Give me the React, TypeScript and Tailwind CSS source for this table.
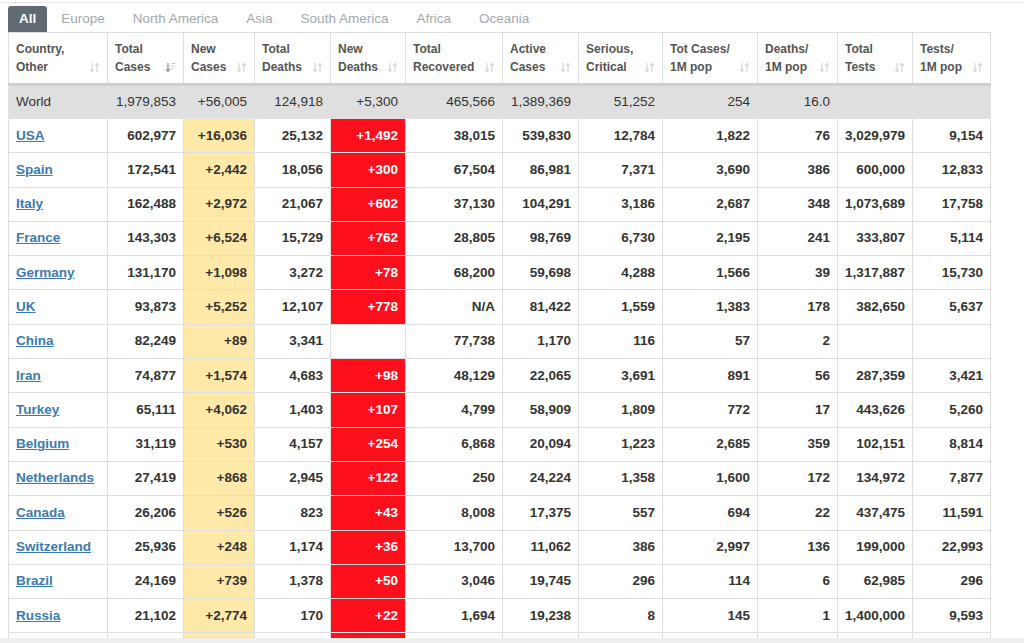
import React from 'react';

const tabs = ['All', 'Europe', 'North America', 'Asia', 'South America', 'Africa', 'Oceania'];

const headers = [
  ['Country,', 'Other'],
  ['Total', 'Cases'],
  ['New', 'Cases'],
  ['Total', 'Deaths'],
  ['New', 'Deaths'],
  ['Total', 'Recovered'],
  ['Active', 'Cases'],
  ['Serious,', 'Critical'],
  ['Tot Cases/', '1M pop'],
  ['Deaths/', '1M pop'],
  ['Total', 'Tests'],
  ['Tests/', '1M pop'],
];

const widths = [99, 76, 71, 76, 75, 97, 76, 84, 95, 80, 75, 78];

const world = ['World', '1,979,853', '+56,005', '124,918', '+5,300', '465,566', '1,389,369', '51,252', '254', '16.0', '', ''];

const rows = [
  ['USA', '602,977', '+16,036', '25,132', '+1,492', '38,015', '539,830', '12,784', '1,822', '76', '3,029,979', '9,154'],
  ['Spain', '172,541', '+2,442', '18,056', '+300', '67,504', '86,981', '7,371', '3,690', '386', '600,000', '12,833'],
  ['Italy', '162,488', '+2,972', '21,067', '+602', '37,130', '104,291', '3,186', '2,687', '348', '1,073,689', '17,758'],
  ['France', '143,303', '+6,524', '15,729', '+762', '28,805', '98,769', '6,730', '2,195', '241', '333,807', '5,114'],
  ['Germany', '131,170', '+1,098', '3,272', '+78', '68,200', '59,698', '4,288', '1,566', '39', '1,317,887', '15,730'],
  ['UK', '93,873', '+5,252', '12,107', '+778', 'N/A', '81,422', '1,559', '1,383', '178', '382,650', '5,637'],
  ['China', '82,249', '+89', '3,341', '', '77,738', '1,170', '116', '57', '2', '', ''],
  ['Iran', '74,877', '+1,574', '4,683', '+98', '48,129', '22,065', '3,691', '891', '56', '287,359', '3,421'],
  ['Turkey', '65,111', '+4,062', '1,403', '+107', '4,799', '58,909', '1,809', '772', '17', '443,626', '5,260'],
  ['Belgium', '31,119', '+530', '4,157', '+254', '6,868', '20,094', '1,223', '2,685', '359', '102,151', '8,814'],
  ['Netherlands', '27,419', '+868', '2,945', '+122', '250', '24,224', '1,358', '1,600', '172', '134,972', '7,877'],
  ['Canada', '26,206', '+526', '823', '+43', '8,008', '17,375', '557', '694', '22', '437,475', '11,591'],
  ['Switzerland', '25,936', '+248', '1,174', '+36', '13,700', '11,062', '386', '2,997', '136', '199,000', '22,993'],
  ['Brazil', '24,169', '+739', '1,378', '+50', '3,046', '19,745', '296', '114', '6', '62,985', '296'],
  ['Russia', '21,102', '+2,774', '170', '+22', '1,694', '19,238', '8', '145', '1', '1,400,000', '9,593'],
  // next row, only its top edge shows under the fold
  ['', '', '', '', ' ', '', '', '', '', '', '', ''],
];

// small double arrow used by the sortable headers
const SortIcon = ({ active }: { active?: boolean }) => {
  if (active) {
    return <svg width="11" height="11" viewBox="0 0 11 11" className="shrink-0">
        <path d="M3 1v8M1 7l2 2.5L5 7" stroke="#999" strokeWidth="1.3" fill="none" />
        <path d="M6.5 1.5h4M6.5 4h3M6.5 6.5h2" stroke="#c9c9c9" strokeWidth="1.1" />
      </svg>;
  }
  return <svg width="11" height="11" viewBox="0 0 11 11" className="shrink-0">
      <path d="M3 1v8.5M1.2 7.3L3 9.5l1.8-2.2" stroke="#d6d6d6" strokeWidth="1.2" fill="none" />
      <path d="M8 10V1.5M6.2 3.7L8 1.5l1.8 2.2" stroke="#d6d6d6" strokeWidth="1.2" fill="none" />
    </svg>;
};

export default function App() {
  return <div className="h-[643px] w-[1024px] overflow-hidden bg-white flex flex-col" style={{ fontFamily: '"Liberation Sans", Arial, sans-serif' }}>
      <div className="h-[2px] shrink-0" />
      <div className="h-px bg-[#e6e6e6] shrink-0" />
      <div className="flex items-end pl-2 pt-[3px] h-[29px] shrink-0">
        {tabs.map((t, i) => i === 0 ? <div key={t} className="bg-[#606a72] text-white font-bold text-[13.5px] h-[26px] px-[11px] flex items-center rounded-t-[3px]">
              {t}
            </div> : <div key={t} className="text-[#a4a9ad] text-[13.5px] h-[26px] px-[14px] flex items-center">
              {t}
            </div>)}
      </div>
      <div className="flex-1 overflow-hidden pl-2">
        <table className="table-fixed border-collapse w-[982px]">
          <colgroup>
            {widths.map((w, i) => <col key={i} style={{ width: w }} />)}
          </colgroup>
          <thead>
            <tr>
              {headers.map((h, i) => <th key={i} className="border border-[#dedede] border-b-[3px] border-b-[#cfcfcf] h-[52px] px-[7px] pt-[7px] pb-[6px] text-left align-top font-bold text-[12px] leading-[18px] text-[#555]">
                  <div>{h[0]}</div>
                  <div className="flex items-center justify-between gap-1">
                    <span>{h[1]}</span>
                    <SortIcon active={i === 1} />
                  </div>
                </th>)}
            </tr>
          </thead>
          <tbody>
            <tr className="bg-[#dfdfdf]">
              {world.map((v, i) => <td key={i} className={`border border-[#e2e2e2] h-[34px] px-[7px] text-[13.5px] text-[#333] ${i === 0 ? 'text-left' : 'text-right'}`}>
                  {v}
                </td>)}
            </tr>
            {rows.map((r, ri) => <tr key={ri}>
                {r.map((v, i) => {
              let bg = '';
              let color = 'text-[#333]';
              if (i === 2) bg = 'bg-[#fee9a9]';
              if (i === 4 && v) {
                bg = 'bg-[#fe0f1c]';
                color = 'text-white';
              }
              return <td key={i} className={`border border-[#dedede] h-[34.3px] px-[7px] text-[13.5px] font-bold ${bg} ${color} ${i === 0 ? 'text-left' : 'text-right'}`}>
                      {i === 0 && v ? <a href="#" className="text-[#3a7bb5] underline">{v}</a> : v}
                    </td>;
            })}
              </tr>)}
          </tbody>
        </table>
      </div>
      <div className="h-[5px] bg-[#efefef] shrink-0" />
    </div>;
}
